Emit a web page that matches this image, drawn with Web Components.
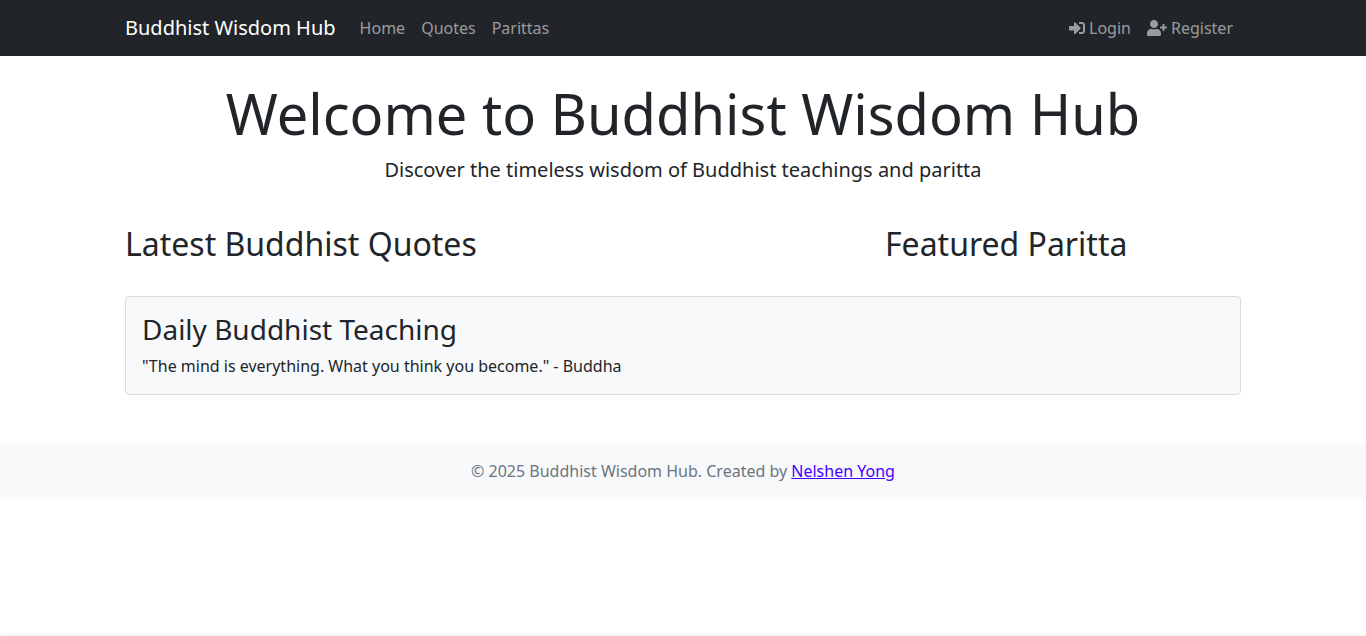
<!DOCTYPE html>
<html lang="en">
<head>
<meta charset="utf-8">
<meta name="viewport" content="width=device-width, initial-scale=1">
<title>Buddhist Wisdom Hub</title>
<style>
  body {
    margin: 0;
    background: #fff;
    color: #212529;
    font: 400 16px/24px "Noto Sans", "Liberation Sans", sans-serif;
    --gutter: 12px;
    --container: 1140px;
    --surface: #f8f9fa;
  }
</style>
</head>
<body>
<wisdom-app></wisdom-app>

<template id="t-app">
  <style>
    :host { display: block; }
    main { box-sizing: border-box; max-width: var(--container); margin: 24px auto 0; padding: 0 var(--gutter); }
    .columns { display: grid; grid-template-columns: 2fr 1fr; margin: 0 calc(-1 * var(--gutter)) 24px; }
    .columns section { padding: 0 var(--gutter); }
    h2 { margin: 0 0 10px; font-size: 32px; line-height: 37px; font-weight: 400; }
    @media (max-width: 767px) { .columns { grid-template-columns: 1fr; } }
  </style>
  <site-nav>
    <a slot="brand" href="#home">Buddhist Wisdom Hub</a>
    <nav-link href="#home">Home</nav-link>
    <nav-link href="#quotes">Quotes</nav-link>
    <nav-link href="#parittas">Parittas</nav-link>
    <nav-link slot="account" href="#login" icon="login">Login</nav-link>
    <nav-link slot="account" href="#register" icon="register">Register</nav-link>
  </site-nav>
  <main>
    <page-hero>
      <span slot="title">Welcome to Buddhist Wisdom Hub</span>
      Discover the timeless wisdom of Buddhist teachings and paritta
    </page-hero>
    <div class="columns">
      <section><h2>Latest Buddhist Quotes</h2></section>
      <section><h2>Featured Paritta</h2></section>
    </div>
    <teaching-card>
      <span slot="title">Daily Buddhist Teaching</span>
      "The mind is everything. What you think you become." - Buddha
    </teaching-card>
  </main>
  <site-footer>© 2025 Buddhist Wisdom Hub. Created by <a slot="author" href="#author">Nelshen Yong</a></site-footer>
  <bottom-sheet></bottom-sheet>
</template>

<template id="t-nav">
  <style>
    :host { display: block; background: #212529; }
    nav { box-sizing: border-box; max-width: var(--container); margin: 0 auto; padding: 8px var(--gutter); display: flex; flex-wrap: wrap; align-items: center; }
    ::slotted([slot="brand"]) { margin-right: 16px; color: #fff; font-size: 20px; line-height: 30px; text-decoration: none; white-space: nowrap; }
    .links, .account { display: flex; }
    .account { margin-left: auto; }
  </style>
  <nav aria-label="Main">
    <slot name="brand"></slot>
    <div class="links"><slot></slot></div>
    <div class="account"><slot name="account"></slot></div>
  </nav>
</template>

<template id="t-link">
  <style>
    :host { display: block; }
    a { display: flex; align-items: center; gap: 4px; padding: 8px; color: rgba(255, 255, 255, .55); text-decoration: none; }
    a:hover { color: rgba(255, 255, 255, .75); }
    svg { display: block; height: 16px; fill: currentColor; }
  </style>
  <a><slot></slot></a>
</template>

<template id="t-hero">
  <style>
    :host { display: block; margin-bottom: 40px; text-align: center; }
    h1 { margin: 0 0 8px; font-size: 56px; line-height: 67px; font-weight: 400; }
    p { margin: 0; font-size: 20px; line-height: 30px; }
  </style>
  <h1><slot name="title"></slot></h1>
  <p><slot></slot></p>
</template>

<template id="t-card">
  <style>
    :host { display: block; padding: 16px; border: 1px solid #d9dbdd; border-radius: 4px; background: var(--surface); }
    h3 { margin: 0 0 8px; font-size: 28px; line-height: 33px; font-weight: 400; }
    p { margin: 0; }
  </style>
  <h3><slot name="title"></slot></h3>
  <p><slot></slot></p>
</template>

<template id="t-footer">
  <style>
    :host { display: block; margin-top: 48px; padding: 16px var(--gutter); background: var(--surface); color: #6c757d; text-align: center; }
    ::slotted(a) { color: #4400ff; }
  </style>
  <footer><slot></slot> <slot name="author"></slot></footer>
</template>

<template id="t-sheet">
  <style>
    /* Closed sheet waiting under the window's edge; only its shadow shows. */
    :host { position: fixed; left: 0; right: 0; top: 100%; height: 64px; background: #fff; box-shadow: 0 0 4px rgba(0, 0, 0, .1); }
  </style>
  <slot></slot>
</template>

<script>
  const ICONS = {
    login: ['0 0 512 512', 'M416 448h-84c-6.6 0-12-5.4-12-12v-40c0-6.6 5.4-12 12-12h84c17.7 0 32-14.3 32-32V160c0-17.7-14.3-32-32-32h-84c-6.6 0-12-5.4-12-12V76c0-6.6 5.4-12 12-12h84c53 0 96 43 96 96v192c0 53-43 96-96 96zm-47-201L201 79c-15-15-41-4.5-41 17v96H24c-13.3 0-24 10.7-24 24v96c0 13.3 10.7 24 24 24h136v96c0 21.5 26 32 41 17l168-168c9.3-9.4 9.3-24.6 0-34z'],
    register: ['0 0 640 512', 'M624 208h-64v-64c0-8.8-7.2-16-16-16h-32c-8.8 0-16 7.2-16 16v64h-64c-8.8 0-16 7.2-16 16v32c0 8.8 7.2 16 16 16h64v64c0 8.8 7.2 16 16 16h32c8.8 0 16-7.2 16-16v-64h64c8.8 0 16-7.2 16-16v-32c0-8.8-7.2-16-16-16zm-400 48c70.7 0 128-57.3 128-128S294.7 0 224 0 96 57.3 96 128s57.3 128 128 128zm89.6 32h-16.7c-22.2 10.2-46.9 16-72.9 16s-50.6-5.8-72.9-16h-16.7C60.2 288 0 348.2 0 422.4V464c0 26.5 21.5 48 48 48h352c26.5 0 48-21.5 48-48v-41.6c0-74.2-60.2-134.4-134.4-134.4z']
  };

  class TemplateElement extends HTMLElement {
    constructor() {
      super();
      this.attachShadow({ mode: 'open' })
        .append(document.getElementById(this.constructor.template).content.cloneNode(true));
    }
  }

  customElements.define('site-nav', class extends TemplateElement { static template = 't-nav'; });
  customElements.define('nav-link', class extends TemplateElement {
    static template = 't-link';
    connectedCallback() {
      const link = this.shadowRoot.querySelector('a');
      link.href = this.getAttribute('href');
      const icon = ICONS[this.getAttribute('icon')];
      if (icon && !link.querySelector('svg')) {
        link.insertAdjacentHTML('afterbegin',
          `<svg viewBox="${icon[0]}" aria-hidden="true"><path d="${icon[1]}"/></svg>`);
      }
    }
  });
  customElements.define('page-hero', class extends TemplateElement { static template = 't-hero'; });
  customElements.define('teaching-card', class extends TemplateElement { static template = 't-card'; });
  customElements.define('site-footer', class extends TemplateElement { static template = 't-footer'; });
  customElements.define('bottom-sheet', class extends TemplateElement { static template = 't-sheet'; });
  customElements.define('wisdom-app', class extends TemplateElement { static template = 't-app'; });
</script>
</body>
</html>
